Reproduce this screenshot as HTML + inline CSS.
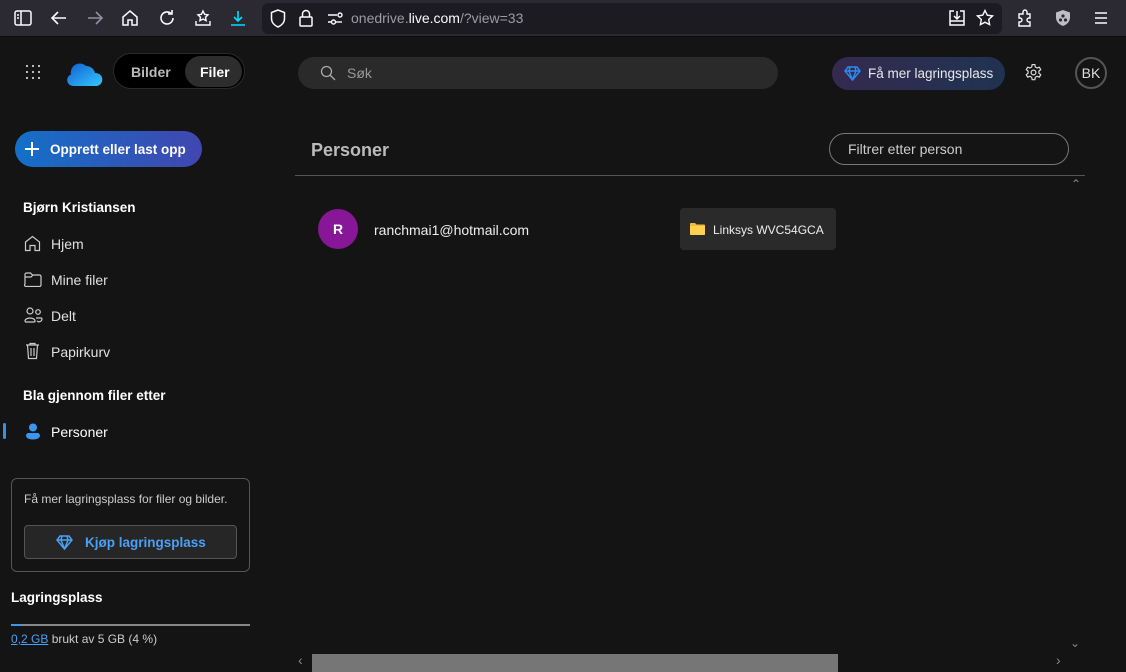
<!DOCTYPE html>
<html><head><meta charset="utf-8"><style>
*{box-sizing:border-box;margin:0;padding:0}
body{width:1126px;height:672px;overflow:hidden;background:#141414;font-family:"Liberation Sans",sans-serif;color:#fff;position:relative}
.tb{position:absolute;left:0;top:0;width:1126px;height:37px;background:#2b2a33;border-bottom:1px solid #0c0c0d}
.url{position:absolute;left:262px;top:3px;width:740px;height:31px;background:#1c1b22;border-radius:6px}
.ic{position:absolute}
.a{position:absolute;white-space:nowrap}
svg{display:block}
.nav{font-size:14px;color:#e0e0e0}
</style></head><body>
<div class="tb">
 <svg class="ic" style="left:14px;top:10px" width="18" height="16" viewBox="0 0 18 16" fill="none" stroke="#fbfbfe" stroke-width="1.5"><rect x="1" y="1" width="16" height="14" rx="2"/><line x1="7" y1="1" x2="7" y2="15"/><line x1="3" y1="5" x2="5" y2="5"/><line x1="3" y1="8" x2="5" y2="8"/></svg>
 <svg class="ic" style="left:50px;top:10px" width="18" height="16" viewBox="0 0 18 16" fill="none" stroke="#fbfbfe" stroke-width="1.6"><path d="M16 8H2M8 2L2 8l6 6"/></svg>
 <svg class="ic" style="left:86px;top:10px" width="18" height="16" viewBox="0 0 18 16" fill="none" stroke="#8f8f9d" stroke-width="1.6"><path d="M2 8h14M10 2l6 6-6 6"/></svg>
 <svg class="ic" style="left:121px;top:9px" width="18" height="18" viewBox="0 0 18 18" fill="none" stroke="#fbfbfe" stroke-width="1.5"><path d="M2 8L9 2l7 6v8H11v-5H7v5H2z"/></svg>
 <svg class="ic" style="left:158px;top:9px" width="18" height="18" viewBox="0 0 18 18" fill="none" stroke="#fbfbfe" stroke-width="1.6"><path d="M15 9a6 6 0 1 1-2-4.5M14 1v4h-4"/></svg>
 <svg class="ic" style="left:194px;top:9px" width="18" height="18" viewBox="0 0 18 18" fill="none" stroke="#fbfbfe" stroke-width="1.4"><path d="M9 2l1.6 3.3 3.4.5-2.5 2.4.6 3.4L9 10l-3.1 1.6.6-3.4L4 5.8l3.4-.5z M2 12v4h14v-4"/></svg>
 <svg class="ic" style="left:229px;top:9px" width="18" height="18" viewBox="0 0 18 18" fill="none" stroke="#00ddff" stroke-width="1.6"><path d="M9 2v10M5 8l4 4 4-4M2 16h14"/></svg>
 <div class="url">
  <svg class="ic" style="left:8px;top:6px" width="16" height="19" viewBox="0 0 16 19" fill="none" stroke="#fbfbfe" stroke-width="1.5"><path d="M8 1L1.5 3.5v6c0 4 3 7 6.5 8.5 3.5-1.5 6.5-4.5 6.5-8.5v-6z"/></svg>
  <svg class="ic" style="left:37px;top:6px" width="14" height="18" viewBox="0 0 14 18" fill="none" stroke="#fbfbfe" stroke-width="1.5"><rect x="1" y="8" width="12" height="9" rx="1"/><path d="M3.5 8V5a3.5 3.5 0 0 1 7 0v3"/></svg>
  <svg class="ic" style="left:65px;top:9px" width="16" height="13" viewBox="0 0 16 13" fill="none" stroke="#fbfbfe" stroke-width="1.4"><path d="M1 3h9M1 10h3"/><circle cx="13" cy="3" r="2"/><circle cx="6.5" cy="10" r="2"/><path d="M9 10h6"/></svg>
  <div class="a" style="left:89px;top:7px;font-size:14px;color:#9b9ba3">onedrive.<span style="color:#fbfbfe">live.com</span>/?view=33</div>
  <svg class="ic" style="left:686px;top:6px" width="18" height="18" viewBox="0 0 18 18" fill="none" stroke="#fbfbfe" stroke-width="1.5"><path d="M6 2H2v14h14V2h-4M9 2v8M6 7l3 3 3-3M2 12h14"/></svg>
  <svg class="ic" style="left:714px;top:6px" width="18" height="18" viewBox="0 0 18 18" fill="none" stroke="#fbfbfe" stroke-width="1.4"><path d="M9 1.5l2.3 4.7 5.2.7-3.8 3.6.9 5.1L9 13.2l-4.6 2.4.9-5.1L1.5 6.9l5.2-.7z"/></svg>
 </div>
 <svg class="ic" style="left:1016px;top:9px" width="18" height="18" viewBox="0 0 18 18" fill="none" stroke="#fbfbfe" stroke-width="1.4"><path d="M3 5h4V3a2 2 0 0 1 4 0v2h3v4h-1a2 2 0 0 0 0 4h1v4H3v-4h1a2 2 0 0 0 0-4H3z"/></svg>
 <svg class="ic" style="left:1054px;top:9px" width="18" height="18" viewBox="0 0 18 18"><path d="M9 1l7 2.5v5c0 4-3 7-7 8.5-4-1.5-7-4.5-7-8.5v-5z" fill="#bdbdc2"/><circle cx="9" cy="7" r="1.6" fill="#2b2a33"/><circle cx="6.5" cy="11" r="1.6" fill="#2b2a33"/><circle cx="11.5" cy="11" r="1.6" fill="#2b2a33"/></svg>
 <svg class="ic" style="left:1093px;top:11px" width="16" height="14" viewBox="0 0 16 14" stroke="#fbfbfe" stroke-width="1.5"><path d="M2 2h12M2 7h12M2 12h12"/></svg>
</div>

<svg class="ic" style="left:25px;top:64px" width="16" height="16" viewBox="0 0 16 16" fill="#ccc"><circle cx="2" cy="2" r="1.1"/><circle cx="8" cy="2" r="1.1"/><circle cx="14" cy="2" r="1.1"/><circle cx="2" cy="8" r="1.1"/><circle cx="8" cy="8" r="1.1"/><circle cx="14" cy="8" r="1.1"/><circle cx="2" cy="14" r="1.1"/><circle cx="8" cy="14" r="1.1"/><circle cx="14" cy="14" r="1.1"/></svg>
<svg class="ic" style="left:66px;top:61px" width="38" height="25" viewBox="0 0 38 25"><defs><linearGradient id="cg" x1="0" y1="0" x2="1" y2="1"><stop offset="0" stop-color="#0f5ed0"/><stop offset="1" stop-color="#36c8ff"/></linearGradient></defs><path d="M7 25a6 6 0 0 1-2-11.6A9 9 0 0 1 20 5a9 9 0 0 1 9 7 6.5 6.5 0 0 1 1.5 13z" fill="url(#cg)"/></svg>
<div class="a" style="left:113px;top:53px;width:132px;height:36px;background:#000;border-radius:18px;border:1px solid #2a2a2a"></div>
<div class="a" style="left:131px;top:64px;font-size:14px;font-weight:bold;color:#bbb">Bilder</div>
<div class="a" style="left:185px;top:56px;width:57px;height:31px;background:#2d2d2d;border-radius:16px"></div>
<div class="a" style="left:200px;top:64px;font-size:14px;font-weight:bold;color:#fff">Filer</div>

<div class="a" style="left:298px;top:57px;width:480px;height:32px;background:#2a2a2a;border-radius:16px"></div>
<svg class="ic" style="left:320px;top:65px" width="16" height="16" viewBox="0 0 16 16" fill="none" stroke="#aaa" stroke-width="1.3"><circle cx="6.5" cy="6.5" r="5"/><path d="M10 10l5 5"/></svg>
<div class="a" style="left:347px;top:65px;font-size:14px;color:#999">Søk</div>

<div class="a" style="left:832px;top:57px;width:173px;height:33px;border-radius:17px;background:linear-gradient(90deg,#352a4f,#1f3350)"></div>
<svg class="ic" style="left:844px;top:66px" width="17" height="15" viewBox="0 0 17 15" fill="none" stroke="#2a8af0" stroke-width="1.5"><path d="M4 1h9l3 4-7.5 9L1 5z M1 5h15 M6 1L5 5l3.5 9 M11 1l1 4-3.5 9"/></svg>
<div class="a" style="left:868px;top:66px;font-size:13.5px;color:#e8e8e8">Få mer lagringsplass</div>
<svg class="ic" style="left:1024px;top:63px" width="19" height="19" viewBox="0 0 24 24" fill="none" stroke="#ddd" stroke-width="1.5"><circle cx="12" cy="12" r="3"/><path d="M10.3 2h3.4l.6 3 2.2 1.3 2.9-1 1.7 3-2.3 2v2.5l2.3 2-1.7 3-2.9-1-2.2 1.3-.6 3h-3.4l-.6-3-2.2-1.3-2.9 1-1.7-3 2.3-2v-2.5l-2.3-2 1.7-3 2.9 1 2.2-1.3z"/></svg>
<div class="a" style="left:1075px;top:57px;width:32px;height:32px;border-radius:50%;border:2px solid #555;text-align:center;line-height:28px;font-size:14px;color:#ddd">BK</div>

<div class="a" style="left:15px;top:131px;width:187px;height:36px;border-radius:18px;background:linear-gradient(90deg,#1370c8,#4146b0)"></div>
<svg class="ic" style="left:25px;top:142px" width="14" height="14" viewBox="0 0 14 14" stroke="#fff" stroke-width="2"><path d="M7 0v14M0 7h14"/></svg>
<div class="a" style="left:50px;top:142px;font-size:13.5px;font-weight:bold;color:#fff">Opprett eller last opp</div>

<div class="a" style="left:23px;top:200px;font-size:13.5px;font-weight:bold">Bjørn Kristiansen</div>
<svg class="ic" style="left:24px;top:235px" width="17" height="17" viewBox="0 0 17 17" fill="none" stroke="#ccc" stroke-width="1.2"><path d="M1.5 7L8.5 1.5 15.5 7v8.5h-4.5v-5h-5v5H1.5z"/></svg>
<div class="a nav" style="left:51px;top:236px">Hjem</div>
<svg class="ic" style="left:24px;top:272px" width="18" height="15" viewBox="0 0 18 15" fill="none" stroke="#ccc" stroke-width="1.2"><path d="M1 2.5a1.5 1.5 0 0 1 1.5-1.5h4l2 2h7a1.5 1.5 0 0 1 1.5 1.5v8.5a1.5 1.5 0 0 1-1.5 1.5h-13A1.5 1.5 0 0 1 1 12z M1 5h6l2-2"/></svg>
<div class="a nav" style="left:51px;top:272px">Mine filer</div>
<svg class="ic" style="left:24px;top:307px" width="19" height="16" viewBox="0 0 19 16" fill="none" stroke="#ccc" stroke-width="1.2"><circle cx="6" cy="4" r="3"/><circle cx="14" cy="5" r="2.3"/><path d="M1 14a5 3 0 0 1 10 0 1 1 0 0 1-1 1H2a1 1 0 0 1-1-1z M12 11h5a1 1 0 0 1 1 1 3 3 0 0 1-5 2"/></svg>
<div class="a nav" style="left:51px;top:308px">Delt</div>
<svg class="ic" style="left:25px;top:342px" width="15" height="18" viewBox="0 0 15 18" fill="none" stroke="#ccc" stroke-width="1.2"><path d="M1 3h13M5 3V1.5h5V3M2.5 3l1 13.5h8l1-13.5M6 6v8M9 6v8"/></svg>
<div class="a nav" style="left:51px;top:344px">Papirkurv</div>

<div class="a" style="left:23px;top:388px;font-size:13.5px;font-weight:bold">Bla gjennom filer etter</div>
<div class="a" style="left:3px;top:423px;width:3px;height:16px;background:#3a8fe0;border-radius:2px"></div>
<svg class="ic" style="left:25px;top:423px" width="16" height="17" viewBox="0 0 16 17" fill="#3a96f0"><circle cx="8" cy="4.5" r="4"/><path d="M1 12.5a2.5 2.5 0 0 1 2.5-2.5h9a2.5 2.5 0 0 1 2.5 2.5c0 2.5-3 4-7 4s-7-1.5-7-4z"/></svg>
<div class="a nav" style="left:51px;top:424px;color:#fff">Personer</div>

<div class="a" style="left:11px;top:478px;width:239px;height:94px;border:1px solid #555;border-radius:6px"></div>
<div class="a" style="left:24px;top:492px;font-size:12px;color:#ccc">Få mer lagringsplass for filer og bilder.</div>
<div class="a" style="left:24px;top:525px;width:213px;height:34px;border:1px solid #555;border-radius:4px;background:#262626"></div>
<svg class="ic" style="left:56px;top:535px" width="17" height="15" viewBox="0 0 17 15" fill="none" stroke="#4aa0f5" stroke-width="1.5"><path d="M4 1h9l3 4-7.5 9L1 5z M1 5h15 M6 1L5 5l3.5 9 M11 1l1 4-3.5 9"/></svg>
<div class="a" style="left:85px;top:535px;font-size:13.5px;font-weight:bold;color:#4aa0f5">Kjøp lagringsplass</div>

<div class="a" style="left:11px;top:590px;font-size:13.5px;font-weight:bold">Lagringsplass</div>
<div class="a" style="left:11px;top:624px;width:239px;height:2px;background:#888"></div>
<div class="a" style="left:11px;top:624px;width:10px;height:2px;background:#3a96f0"></div>
<div class="a" style="left:11px;top:632px;font-size:12px;color:#ccc"><span style="color:#4aa0f5;text-decoration:underline">0,2 GB</span> brukt av 5 GB (4 %)</div>

<div class="a" style="left:311px;top:140px;font-size:18px;font-weight:bold;color:#bbb">Personer</div>
<div class="a" style="left:829px;top:133px;width:240px;height:32px;border:1px solid #777;border-radius:16px"></div>
<div class="a" style="left:848px;top:141px;font-size:14px;color:#ccc">Filtrer etter person</div>
<div class="a" style="left:295px;top:175px;width:790px;height:1px;background:#555"></div>
<div class="a" style="left:1071px;top:177px;font-size:12px;color:#888">&#8963;</div>

<div class="a" style="left:318px;top:209px;width:40px;height:40px;border-radius:50%;background:#881798;text-align:center;line-height:40px;font-size:14px;font-weight:bold">R</div>
<div class="a" style="left:374px;top:222px;font-size:14px;color:#eee">ranchmai1@hotmail.com</div>
<div class="a" style="left:680px;top:208px;width:156px;height:42px;border-radius:4px;background:#2a2a2a"></div>
<svg class="ic" style="left:690px;top:223px" width="15" height="12" viewBox="0 0 15 12"><path d="M0 1a1 1 0 0 1 1-1h4l1.5 1.5H14a1 1 0 0 1 1 1V11a1 1 0 0 1-1 1H1a1 1 0 0 1-1-1z" fill="#f4b93c"/><path d="M0 3h15v8a1 1 0 0 1-1 1H1a1 1 0 0 1-1-1z" fill="#ffd04f"/></svg>
<div class="a" style="left:713px;top:223px;font-size:12px;color:#eee">Linksys WVC54GCA</div>

<div class="a" style="left:1070px;top:636px;font-size:12px;color:#888">&#8964;</div>
<div class="a" style="left:298px;top:652px;font-size:14px;color:#888">&#8249;</div>
<div class="a" style="left:312px;top:654px;width:526px;height:18px;background:#767676"></div>
<div class="a" style="left:1056px;top:652px;font-size:14px;color:#888">&#8250;</div>
</body></html>
